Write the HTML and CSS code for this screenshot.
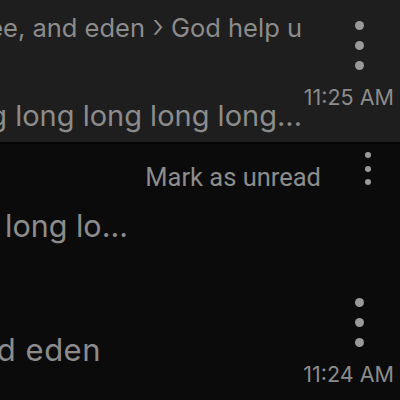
FILE: index.html
```html
<!DOCTYPE html>
<html lang="en">
<head>
    <meta charset="UTF-8">
    <title>Threads</title>
    <link rel="stylesheet" href="styles.css">
</head>
<body>
    <ul class="threads">
        <!-- Selected thread -->
        <li class="thread thread-selected">
            <div class="thread-body">
                <div class="thread-title">Marcus, bee, and eden <span class="chevron">›</span> God help u</div>
                <div class="thread-preview">long long long long long long long long long...</div>
            </div>
            <div class="thread-meta">
                <span class="more"><i></i><i></i><i></i></span>
                <span class="time">11:25 AM</span>
            </div>
        </li>

        <!-- Thread with menu open -->
        <li class="thread thread-menu">
            <div class="menu-row">
                <span class="menu-item">Mark as unread</span>
                <span class="more more-small"><i></i><i></i><i></i></span>
            </div>
            <div class="menu-preview">long lo...</div>
        </li>

        <!-- Older thread -->
        <li class="thread">
            <div class="thread-body thread-body-short">
                <div class="thread-title thread-title-big">Marcus, bee, and eden</div>
            </div>
            <div class="thread-meta">
                <span class="more"><i></i><i></i><i></i></span>
                <span class="time">11:24 AM</span>
            </div>
        </li>
    </ul>
</body>
</html>
```

FILE: styles.css
```css
:root {
    --bg-selected: #1e1e1e;
    --bg-dark: #0b0b0b;
    --text-muted: #8c8c8c;
    --dot: #9a9a9a;
}

* {
    margin: 0;
    padding: 0;
    box-sizing: border-box;
}

body {
    background: var(--bg-dark);
    color: var(--text-muted);
    font-family: Inter, 'Noto Sans', sans-serif;
    overflow: hidden;
}

.threads {
    list-style: none;
}

/* Thread rows */
.thread {
    display: flex;
    height: 133px;
    overflow: hidden;
}

.thread-selected {
    height: 144px;
    background: var(--bg-selected);
    border-bottom: 2px solid #050505;
}

.thread-body {
    flex: 1;
    min-width: 0;
    display: flex;
    flex-direction: column;
    align-items: flex-end;
    overflow: hidden;
}

.thread-body-short {
    flex: 0 0 101px;
    margin-right: auto;
}

.thread-title,
.thread-preview,
.menu-preview {
    white-space: nowrap;
}

.thread-title {
    font-size: 25.5px;
    line-height: 32px;
    margin-top: 12px;
}

.chevron {
    font-size: 1.25em;
    line-height: 0;
    font-weight: 300;
}

.thread-preview {
    font-size: 29px;
    line-height: 36px;
    margin-top: 54px;
}

.thread-title-big {
    font-size: 31px;
    letter-spacing: 0.5px;
    line-height: 36px;
    margin-top: 55px;
}

.thread-meta {
    width: 98px;
    display: flex;
    flex-direction: column;
    align-items: flex-end;
    padding-right: 6px;
}

/* Kebab dots */
.more {
    display: flex;
    flex-direction: column;
    align-items: center;
    gap: 11px;
    width: 24px;
    margin: 20.5px 23px 0 0;
}

.more i {
    width: 9px;
    height: 9px;
    border-radius: 50%;
    background: var(--dot);
}

.more-small {
    gap: 7.5px;
    width: 6px;
    margin: 0;
}

.more-small i {
    width: 6px;
    height: 6px;
}

.time {
    font-size: 21.5px;
    line-height: 26px;
    margin-top: 14.5px;
}

/* Menu row */
.thread-menu {
    flex-direction: column;
}

.menu-row {
    display: flex;
    justify-content: flex-end;
    align-items: flex-start;
    gap: 44px;
    padding: 8px 29px 0 0;
}

.menu-item {
    font-family: Roboto, 'Liberation Sans', sans-serif;
    font-size: 25.5px;
    line-height: 32px;
    margin-top: 9px;
}

.menu-preview {
    font-size: 30.5px;
    line-height: 36px;
    margin: 15px 0 0 5px;
}
```
